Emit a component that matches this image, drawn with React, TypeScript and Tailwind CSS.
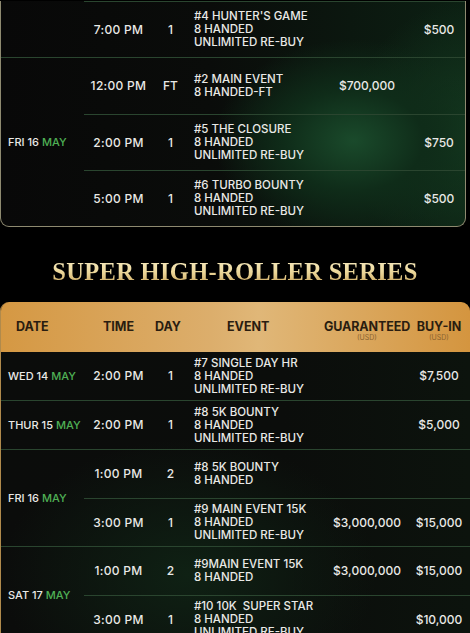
import React from 'react';

type Row = {
  time: string;
  day: string;
  event: string[];
  guaranteed?: string;
  buyin?: string;
};

type Group = {
  date: string;
  rows: Row[];
};

// upper table is the tail of the previous series; its first row continues a group that starts above the fold
const upper: Group[] = [
  {
    date: '',
    rows: [{ time: '7:00 PM', day: '1', event: ["#4 HUNTER'S GAME", '8 HANDED', 'UNLIMITED RE-BUY'], buyin: '$500' }],
  },
  {
    date: 'FRI 16',
    rows: [
      { time: '12:00 PM', day: 'FT', event: ['#2 MAIN EVENT', '8 HANDED-FT'], guaranteed: '$700,000' },
      { time: '2:00 PM', day: '1', event: ['#5 THE CLOSURE', '8 HANDED', 'UNLIMITED RE-BUY'], buyin: '$750' },
      { time: '5:00 PM', day: '1', event: ['#6 TURBO BOUNTY', '8 HANDED', 'UNLIMITED RE-BUY'], buyin: '$500' },
    ],
  },
];

const highRoller: Group[] = [
  {
    date: 'WED 14',
    rows: [{ time: '2:00 PM', day: '1', event: ['#7 SINGLE DAY HR', '8 HANDED', 'UNLIMITED RE-BUY'], buyin: '$7,500' }],
  },
  {
    date: 'THUR 15',
    rows: [{ time: '2:00 PM', day: '1', event: ['#8 5K BOUNTY', '8 HANDED', 'UNLIMITED RE-BUY'], buyin: '$5,000' }],
  },
  {
    date: 'FRI 16',
    rows: [
      { time: '1:00 PM', day: '2', event: ['#8 5K BOUNTY', '8 HANDED'] },
      {
        time: '3:00 PM',
        day: '1',
        event: ['#9 MAIN EVENT 15K', '8 HANDED', 'UNLIMITED RE-BUY'],
        guaranteed: '$3,000,000',
        buyin: '$15,000',
      },
    ],
  },
  {
    date: 'SAT 17',
    rows: [
      { time: '1:00 PM', day: '2', event: ['#9MAIN EVENT 15K', '8 HANDED'], guaranteed: '$3,000,000', buyin: '$15,000' },
      { time: '3:00 PM', day: '1', event: ['#10 10K  SUPER STAR', '8 HANDED', 'UNLIMITED RE-BUY'], buyin: '$10,000' },
    ],
  },
];

function ScheduleRow({ row, divider, tall }: { row: Row; divider: boolean; tall: boolean }) {
  return (
    <div
      className={`flex items-center ${tall ? 'h-[56px]' : 'h-[48px]'} ${
        divider ? 'border-t border-[#2a452f]' : ''
      }`}
    >
      <div className="w-[69px] shrink-0 text-center text-[12px] tracking-[0.3px]">{row.time}</div>
      <div className="w-[35px] shrink-0 text-center text-[12px]">{row.day}</div>
      <div className="w-[143px] shrink-0 pl-[6px] text-[11.5px] leading-[13px] whitespace-pre">
        {row.event.map((l, i) => (
          <div key={i}>{l}</div>
        ))}
      </div>
      <div className="w-[72px] shrink-0 text-center text-[12px]">{row.guaranteed}</div>
      <div className="w-[72px] shrink-0 text-center text-[12px]">{row.buyin}</div>
    </div>
  );
}

function DateGroup({
  group,
  first,
  tall,
  continued = false,
}: {
  group: Group;
  first: boolean;
  tall: boolean;
  continued?: boolean;
}) {
  return (
    <div className={`flex ${first ? '' : 'border-t border-[#2a452f]'}`}>
      <div className="w-[83px] shrink-0 flex items-center pl-[7px] text-[11px] whitespace-nowrap">
        {group.date && (
          <>
            {group.date}&nbsp;<span className="text-[#4fb055]">MAY</span>
          </>
        )}
      </div>
      <div className="flex flex-col">
        {group.rows.map((r, i) => (
          <ScheduleRow key={i} row={r} divider={i > 0 || continued} tall={tall} />
        ))}
      </div>
    </div>
  );
}

export default function App() {
  return (
    <div
      className="h-[633px] w-[470px] overflow-hidden bg-black text-[#e9e9e6] font-medium"
      style={{ fontFamily: 'Inter, "Open Sans", sans-serif' }}
    >
      {/* upper table (continued from above) */}
      <div className="mt-[1px] w-[466px] overflow-hidden rounded-b-[9px] border-[1.5px] border-t-0 border-[#8e8a70] bg-[radial-gradient(ellipse_30%_45%_at_76%_62%,#1a4a2b_0%,#0f2c19_50%,transparent_100%),radial-gradient(ellipse_25%_60%_at_100%_60%,#143a20_0%,transparent_100%),linear-gradient(90deg,#080808_0%,#0a0c0a_45%,#0c2013_100%)]">
        {upper.map((g, i) => (
          <DateGroup key={i} group={g} first={i === 0} tall continued={i === 0} />
        ))}
      </div>

      <h2
        className="mt-[31px] text-center text-[24.5px] font-bold leading-[28px] tracking-[0.3px] bg-gradient-to-b from-[#f7ecc4] via-[#ecd79a] to-[#c9a256] bg-clip-text text-transparent"
        style={{ fontFamily: '"Liberation Serif", serif' }}
      >
        SUPER HIGH-ROLLER SERIES
      </h2>

      <div className="mt-[16px] w-[470px] overflow-hidden rounded-t-[9px] border-l-[1.5px] border-[#b08a4c] bg-[radial-gradient(ellipse_40%_40%_at_40%_80%,#0f2114_0%,transparent_100%),linear-gradient(90deg,#0b0c0b_0%,#0b0d0b_60%,#0c130d_100%)]">
        <div className="flex h-[50px] items-center bg-[linear-gradient(90deg,#d59843_0%,#dcae6c_45%,#e0b778_55%,#d4953f_100%)] text-[#2a1d10] font-bold text-[12.5px]">
          <div className="w-[83px] shrink-0 pl-[15px]">DATE</div>
          <div className="w-[69px] shrink-0 text-center">TIME</div>
          <div className="w-[30px] shrink-0 text-center">DAY</div>
          <div className="w-[148px] shrink-0 pl-[44px]">EVENT</div>
          <div className="w-[72px] shrink-0 flex flex-col items-center pt-[8px]">
            <span className="leading-[12px] tracking-[-0.1px]">GUARANTEED</span>
            <span className="text-[7px] leading-[9px] font-normal text-[#8a6330]">(USD)</span>
          </div>
          <div className="w-[72px] shrink-0 flex flex-col items-center pt-[8px]">
            <span className="leading-[12px]">BUY-IN</span>
            <span className="text-[7px] leading-[9px] font-normal text-[#8a6330]">(USD)</span>
          </div>
        </div>
        {highRoller.map((g, i) => (
          <DateGroup key={i} group={g} first={i === 0} tall={false} />
        ))}
      </div>
    </div>
  );
}
